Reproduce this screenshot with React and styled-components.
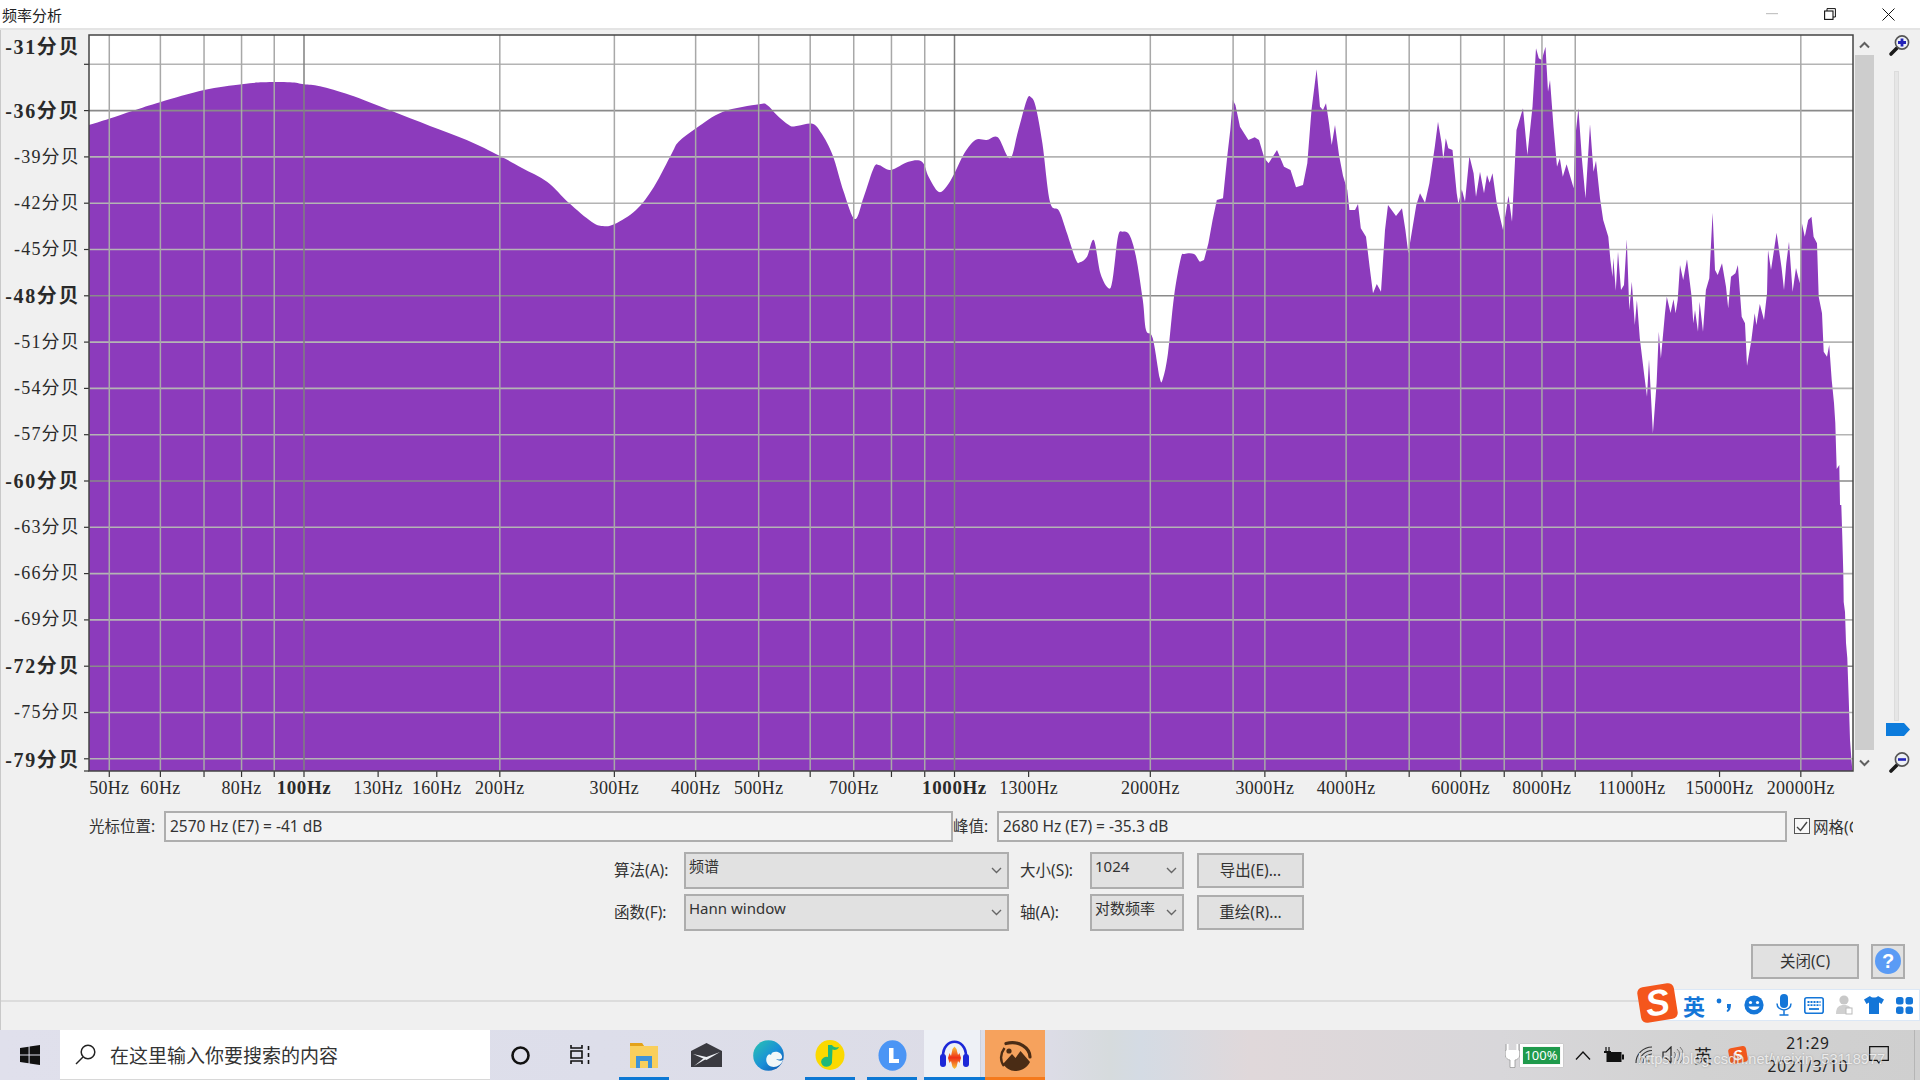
import React from "react";
import styled, { createGlobalStyle } from "styled-components";

const Global = createGlobalStyle`
  html, body { margin: 0; padding: 0; width: 1920px; height: 1080px; overflow: hidden; background: #f0f0f0; }
  #root { width: 1920px; height: 1080px; }
  * { box-sizing: border-box; }
`;

const UI_FONT = `"Noto Sans", "Noto Sans CJK SC", sans-serif`;
const AXIS_FONT = `"Liberation Serif", "Noto Sans CJK SC", serif`;

const Page = styled.div`
  position: relative;
  width: 1920px;
  height: 1080px;
  display: flex;
  flex-direction: column;
  font-family: ${UI_FONT};
  color: #333;
  overflow: hidden;
`;

/* ---------- title bar ---------- */
const TitleBar = styled.div`
  height: 30px;
  flex: none;
  display: flex;
  align-items: center;
  background: #fff;
  border-bottom: 2px solid #e4e4e4;
`;
const Title = styled.div`
  flex: 1;
  padding-left: 2px;
  font-size: 15px;
  color: #222;
`;
const WinButton = styled.div`
  width: 58.5px;
  height: 28px;
  padding-right: 4px;
  display: flex;
  align-items: center;
  justify-content: center;
`;

/* ---------- window body ---------- */
const Body = styled.div`
  flex: 1;
  min-height: 0;
  display: flex;
  flex-direction: column;
  background: #f0f0f0;
  border-left: 1px solid #c9c9c9;
`;
const ChartRow = styled.div`
  height: 781px;
  flex: none;
  display: flex;
`;
const ChartSvg = styled.svg`
  display: block;
  flex: none;
`;
const AxisText = styled.text`
  font-family: ${AXIS_FONT};
  font-size: ${(p) => (p.$major ? 19 : 18)}px;
  font-weight: ${(p) => (p.$major ? 700 : 400)};
  letter-spacing: ${(p) => (p.$major ? 0.6 : 0.3)}px;
  fill: #2a2a2a;
`;
const DbText = styled(AxisText)`
  font-size: ${(p) => (p.$major ? 20 : 18)}px;
  letter-spacing: ${(p) => (p.$major ? 1.6 : 1.2)}px;
`;

const ScrollCol = styled.div`
  width: 19px;
  flex: none;
  margin-top: 5px;
  height: 741px;
  display: flex;
  flex-direction: column;
`;
const ScrollArrow = styled.div`
  height: ${(p) => p.$h}px;
  flex: none;
  display: flex;
  align-items: center;
  justify-content: center;
`;
const ScrollThumb = styled.div`
  flex: 1;
  background: #cdcdcd;
`;
const ZoomCol = styled.div`
  width: 45px;
  flex: none;
  display: flex;
  flex-direction: column;
  align-items: center;
  padding-top: 3.5px;
`;
const ZoomIcon = styled.div`
  height: 26px;
  flex: none;
  margin-left: 5px;
  margin-top: ${(p) => p.$mt || 0}px;
`;
const SliderTrack = styled.div`
  position: relative;
  width: 5px;
  height: 650px;
  margin-top: 11.5px;
  background: #e6e6e6;
  border: 1px solid #dcdcdc;
  flex: none;
`;
const SliderThumb = styled.div`
  position: absolute;
  left: -9px;
  top: 651px;
  width: 24px;
  height: 13px;
  background: #0c7bdc;
  clip-path: polygon(0 0, 75% 0, 100% 50%, 75% 100%, 0 100%);
`;

/* ---------- readouts ---------- */
const ReadoutRow = styled.div`
  height: 31px;
  flex: none;
  display: flex;
  align-items: stretch;
  padding-left: 88px;
  font-size: 15.5px;
`;
const ReadoutLabel = styled.div`
  width: ${(p) => p.$w}px;
  flex: none;
  display: flex;
  align-items: center;
  padding-bottom: 2px;
  white-space: nowrap;
`;
const ReadoutBox = styled.div`
  width: ${(p) => p.$w}px;
  flex: none;
  display: flex;
  align-items: center;
  padding: 0 0 2px 4px;
  border: 2px solid #aeaeae;
  background: #f3f3f3;
  white-space: nowrap;
`;
const GridCheck = styled.label`
  margin-left: 7px;
  width: 59px;
  flex: none;
  overflow: hidden;
  display: flex;
  align-items: center;
  gap: 3px;
  padding-bottom: 1px;
  white-space: nowrap;
`;
const CheckBox = styled.span`
  width: 16px;
  height: 16px;
  flex: none;
  display: flex;
  align-items: center;
  justify-content: center;
  border: 1.5px solid #555;
  background: #f8f8f8;
`;

/* ---------- options ---------- */
const OptionsGrid = styled.div`
  flex: none;
  margin-top: 10px;
  padding-left: 613px;
  display: grid;
  grid-template-columns: 70px 325px 81px 94px 107px;
  grid-auto-rows: 36.5px;
  row-gap: 5.5px;
  font-size: 15.5px;
  align-items: center;
`;
const OptLabel = styled.div`
  white-space: nowrap;
  padding-bottom: 2px;
  padding-left: ${(p) => p.$inset || 0}px;
`;
const Dropdown = styled.div`
  position: relative;
  height: 100%;
  background: #e1e1e1;
  border: 2px solid #adadad;
  padding: 2px 26px 0 3px;
  font-size: 15px;
  line-height: 20px;
  white-space: nowrap;
  overflow: hidden;
`;
const Chevron = styled.svg`
  position: absolute;
  right: 5px;
  top: 13px;
`;
const Button = styled.div`
  display: flex;
  align-items: center;
  justify-content: center;
  padding-bottom: ${(p) => (p.$tight ? 0 : 2)}px;
  background: #e1e1e1;
  border: 2px solid #adadad;
  font-size: 15.5px;
  white-space: nowrap;
  height: ${(p) => p.$h || 35}px;
  width: ${(p) => p.$w}px;
  margin-left: ${(p) => p.$ml || 0}px;
`;

/* ---------- footer ---------- */
const FooterRow = styled.div`
  flex: none;
  margin-top: 13px;
  padding-right: 15px;
  display: flex;
  justify-content: flex-end;
  gap: 12px;
`;
const HelpDot = styled.div`
  width: 26px;
  height: 26px;
  border-radius: 50%;
  background: #5a9bf5;
  color: #fff;
  font-weight: 700;
  font-size: 20px;
  display: flex;
  align-items: center;
  justify-content: center;
  font-family: "Liberation Sans", sans-serif;
`;
const StatusBar = styled.div`
  flex: 1;
  margin-top: 21px;
  border-top: 2px solid #dcdcdc;
`;

/* ---------- taskbar ---------- */
const Taskbar = styled.div`
  position: relative;
  height: 50px;
  flex: none;
  display: flex;
  align-items: stretch;
  background: linear-gradient(90deg, #e0e0ec 0, #dddeea 600px, #dcdce6 1050px, #d6dbdd 1110px, #d4dbe4 1140px, #e0d8da 1250px, #d8d7da 1500px, #d2d2d2 1700px, #cfcfcf 1920px);
`;
const StartBtn = styled.div`
  width: 60px;
  flex: none;
  display: flex;
  align-items: center;
  justify-content: center;
`;
const SearchBox = styled.div`
  width: 430px;
  flex: none;
  background: #fff;
  display: flex;
  align-items: center;
  gap: 14px;
  padding-left: 15px;
  font-size: 19px;
  color: #333;
  font-family: "Noto Sans CJK SC", sans-serif;
  border-bottom: 1px solid #d8d8d8;
`;
const AppSlot = styled.div`
  position: relative;
  width: ${(p) => p.$w || 61}px;
  flex: none;
  margin-left: ${(p) => p.$ml || 0}px;
  display: flex;
  align-items: center;
  justify-content: center;
  background: ${(p) => p.$bg || "transparent"};
  &::after {
    content: "";
    display: ${(p) => (p.$bar ? "block" : "none")};
    position: absolute;
    left: ${(p) => p.$inset ?? 5}px;
    right: ${(p) => p.$inset ?? 5}px;
    bottom: 0;
    height: 3px;
    background: ${(p) => p.$bar};
  }
`;
const Tray = styled.div`
  margin-left: auto;
  display: flex;
  align-items: stretch;
`;
const TraySlot = styled.div`
  width: ${(p) => p.$w}px;
  flex: none;
  display: flex;
  align-items: center;
  justify-content: ${(p) => p.$justify || "center"};
  font-size: ${(p) => p.$fs || 14}px;
  color: #222;
`;
const PlugBattery = styled.div`
  display: flex;
  align-items: center;
`;
const BatteryOuter = styled.div`
  position: relative;
  width: 43px;
  height: 23px;
  margin-right: 3px;
  border: 2px solid #fff;
  padding: 1px;
  background: #f7f7f7;
  box-shadow: 0 0 1px #999;
`;
const BatteryFill = styled.div`
  width: 100%;
  height: 100%;
  background: #1f9a4c;
  color: #fff;
  font-size: 13px;
  line-height: 17px;
  text-align: center;
  font-family: "Noto Sans", sans-serif;
`;
const Clock = styled.div`
  display: flex;
  flex-direction: column;
  align-items: center;
  font-size: 15.5px;
  line-height: 23px;
  color: #222;
  letter-spacing: 0.8px;
  font-family: "Noto Sans", sans-serif;
  white-space: nowrap;
`;
const EdgeLine = styled.div`
  width: 1px;
  height: 100%;
  margin-left: 14px;
  background: #b5b5b5;
`;
const TraySogou = styled.span`
  display: inline-flex;
  width: 18px;
  height: 16px;
  align-items: center;
  justify-content: center;
  border-radius: 3px;
  background: #f2591d;
  color: #fff;
  font: italic 700 14px "Liberation Sans", sans-serif;
  transform: rotate(-10deg);
`;
const Watermark = styled.div`
  position: absolute;
  left: 1638px;
  top: 21px;
  font-family: "Liberation Sans", sans-serif;
  font-size: 14.6px;
  white-space: nowrap;
  color: rgba(255, 255, 255, 0.75);
  text-shadow: 0 0 2px rgba(110, 110, 110, 0.6);
`;

/* ---------- floating input-method bar ---------- */
const ImeBar = styled.div`
  position: absolute;
  left: 1660px;
  top: 989px;
  width: 260px;
  height: 32px;
  background: #fff;
  border: 1px solid #dce8f6;
  display: flex;
  align-items: center;
  padding-left: 18px;
  gap: 0;
`;
const ImeLogo = styled.div`
  position: absolute;
  left: -22px;
  top: -5px;
  width: 37px;
  height: 36px;
  border-radius: 6px;
  background: #f4561c;
  transform: rotate(-9deg);
  color: #fff;
  display: flex;
  align-items: center;
  justify-content: center;
  font: italic 900 36px "Liberation Sans", sans-serif;
`;
const ImeCell = styled.div`
  width: 30px;
  flex: none;
  display: flex;
  justify-content: center;
  align-items: center;
  color: #1476d8;
  font-weight: 700;
  font-size: ${(p) => p.$fs || 20}px;
  font-family: "Noto Sans CJK SC", sans-serif;
`;

/* ---------- data ---------- */
const OUT = [
[89,125],[109,118.7],[133,110.7],[160.7,102],[204,90],[241.7,84.3],[263,82.3],[290,82.3],[304,84.3],[320,86.3],[350,95],[390,110.3],[430,126],[466.7,140],[500,156],
[522,168],[547,181.7],[569,203],[591.5,221.7],[602.7,226],[614.7,224],[636,210],[654,186.7],[672,153],[678.6,141.7],[696.4,128],[723,111.7],[759,104.3],[767,105],[776.8,115],[790,125.7],[798,125.7],[812.5,123.7],[821.4,133.3],[832.6,155],[843.7,191.7],[855,219],[863.8,196.7],[874,167.3],[879.5,165.3],[890.6,170],[908.5,161.7],[922,161.7],[928.6,176.7],[938.4,191.7],[946.4,186.7],[954.5,173.3],[964.3,153.3],[975.4,140],[986.6,140],[997.8,137.3],[1010,158.3],[1017.9,131.7],[1026.8,100],[1031,97.3],[1035.7,106.7],[1042.4,143.3],[1050,201.7],[1059,210.7],[1067,233.3],[1076,260],[1080,262.3],[1087,256.7],[1093.8,240],[1100.4,273.3],[1108.5,288.3],[1112.5,280],[1118,236.7],[1122.8,231.7],[1129.5,235],[1136,256.7],[1142.8,300],[1146,330],[1152.7,338],[1159.8,378.3],[1163,378.3],[1168,353],[1174,296.7],[1180.8,258.3],[1184.4,254],[1194,254],
[1200,261.7],[1204,260],[1208.4,243.3],[1212.6,220],[1216.8,200],[1223,198.3],[1227.4,155],[1230.3,130],[1232.8,100],[1235.4,105],[1240,126.7],[1248.4,140],[1254.7,137.3],[1259,140],[1264.4,158.3],[1268.6,163.3],[1277,150],[1284,166.7],[1290.5,170],[1296,187.3],[1303,185],[1307.3,163.3],[1311.5,110],[1316.6,69.3],[1320,106.7],[1323,110],[1326,103.3],[1329,123.3],[1331.7,145],[1335,125],[1339,155],[1343,175.7],[1347.3,190],[1349.4,210],[1355,210],[1358,204],[1360.8,228.3],[1366,236.7],[1369.6,266.7],[1373,293.3],[1376.8,284],[1381,291.7],[1385,230],[1388,205],[1396,216],[1402,208.3],[1405.4,230],[1408.3,253.3],[1411.7,232.7],[1416.3,205],[1420,193.3],[1425,202.7],[1429.4,183.3],[1434.8,146.7],[1438,121.7],[1441.6,143.3],[1443.3,159.3],[1445.8,138.3],[1448.3,148.3],[1452.5,150],[1456.7,193.3],[1458.4,204],[1461.8,189.3],[1465,201.7],[1469.4,156],[1473.6,173.3],[1476,196.7],[1480,171.7],[1484,193.3],[1487,175],[1489.6,182.7],[1492.5,173.3],[1496.7,203.3],[1503,230],[1508.5,195.7],[1512,221.7],[1516.5,130],[1523,108.3],[1527.4,155],[1532.5,106.7],[1536,48.3],[1538.8,58.3],[1541.7,60],[1545.5,46.7],[1548,91.7],[1550,80],[1553.5,126.7],[1557,166.7],[1559.8,158.3],[1562.8,176.7],[1566.6,164.3],[1573.7,188.3],[1575,140],[1578.4,108.3],[1582,160],[1585.5,198.3],[1590,124.3],[1593.5,171.7],[1596,160.7],[1600,198.3],[1603.2,220],[1608.3,236.7],[1610.4,260],[1612.5,276.7],[1613.3,258],[1615.8,290.7],[1618,251.7],[1621,290],[1624,285],[1626.8,239.3],[1629.3,310],[1631.8,281.7],[1634.8,325],[1636.9,300],[1639.8,338.3],[1644,373.3],[1647,396.7],[1649,359.3],[1652.9,433.3],[1656.6,383.3],[1658.8,331.7],[1660.9,358.3],[1665,313],[1666.8,296.7],[1670.5,313],[1673.5,299.3],[1675.6,313.3],[1677.7,300],[1680,265],[1683.2,280],[1687,259.3],[1691.6,296.7],[1693.3,323.3],[1695,310],[1698,331.7],[1699.6,301.7],[1703,331.7],[1705.9,290],[1709.3,278.3],[1712.6,212.7],[1715,270],[1717.7,275],[1722,263.3],[1726,286.7],[1728.2,308.3],[1731,276.7],[1735.4,273.3],[1737.9,265],[1741.7,316.7],[1745,323.3],[1747,366],[1751.4,340],[1754.7,313.3],[1756.4,325],[1759.8,304],[1764,320],[1767,293.3],[1768,250],[1771,270],[1776.6,232.7],[1781.6,268],[1784,290],[1786.3,263.3],[1789,241.7],[1792.6,291.7],[1796,268],[1799.7,283.3],[1801.9,223.3],[1804.8,236.7],[1808.2,220],[1811.5,216.7],[1813.6,236.7],[1817,243.3],[1818.7,296.7],[1822,313.3],[1823.7,351.7],[1827,356.7],[1829.2,345],[1831.7,380],
[1832.7,390],[1834,403],[1835.3,423],[1836,447],[1836.7,469],[1839.3,465],[1840,505],[1841.3,505],[1842.3,537],[1843.3,573],[1843.7,602],[1845,612],[1846,643],[1847.3,658],[1848.7,698],[1850,740],[1851.3,758],[1852.3,770],[1853,771],
];

/* smooth Catmull-Rom curve for the low-frequency part, straight pixel-sharp spikes above 1200 */
const buildArea = () => {
  let d = "M89 771 L89 125";
  for (let i = 1; i < OUT.length; i++) {
    const p1 = OUT[i - 1];
    const p2 = OUT[i];
    if (p2[0] <= 1200) {
      const p0 = OUT[Math.max(i - 2, 0)];
      const p3 = OUT[Math.min(i + 1, OUT.length - 1)];
      const c1x = p1[0] + (p2[0] - p0[0]) / 6;
      const c1y = p1[1] + (p2[1] - p0[1]) / 6;
      const c2x = p2[0] - (p3[0] - p1[0]) / 6;
      const c2y = p2[1] - (p3[1] - p1[1]) / 6;
      d += ` C${c1x.toFixed(1)} ${c1y.toFixed(1)} ${c2x.toFixed(1)} ${c2y.toFixed(1)} ${p2[0]} ${p2[1]}`;
    } else {
      d += ` L${p2[0]} ${p2[1]}`;
    }
  }
  return d + " Z";
};
const AREA = buildArea();

const X_NUDGE = { 50: 1.1, 60: 0.7, 70: 0.8, 80: 0.6 };
const fx = (f) => 304 + 650.5 * Math.log10(f / 100) + (X_NUDGE[f] || 0);
const GRID_F = [50,60,70,80,90,100,200,300,400,500,600,700,800,900,1000,2000,2681,3000,4000,5000,6000,7000,8000,9000,20000];
const DARK_F = [100, 1000];
const TICK_F = [...GRID_F.filter((f) => f !== 2681), 130, 160, 1300, 11000, 15000];
const X_LABELS = [50,60,80,100,130,160,200,300,400,500,700,1000,1300,2000,3000,4000,6000,8000,11000,15000,20000];

const GRID_Y = [-33,-36,-39,-42,-45,-48,-51,-54,-57,-60,-63,-66,-69,-72,-75,-78];
const dy = (db) => 110.6 + ((-36 - db) / 3) * 46.3;
const Y_LABELS = [
  { t: "-31分贝", y: 54, major: true },
  { t: "-36分贝", y: 118, major: true },
  { t: "-39分贝", y: 163 },
  { t: "-42分贝", y: 209 },
  { t: "-45分贝", y: 255 },
  { t: "-48分贝", y: 303, major: true },
  { t: "-51分贝", y: 348 },
  { t: "-54分贝", y: 394 },
  { t: "-57分贝", y: 440 },
  { t: "-60分贝", y: 488, major: true },
  { t: "-63分贝", y: 533 },
  { t: "-66分贝", y: 579 },
  { t: "-69分贝", y: 625 },
  { t: "-72分贝", y: 673, major: true },
  { t: "-75分贝", y: 718 },
  { t: "-79分贝", y: 767, major: true },
];
const MAJOR_Y = [-36, -48, -60, -72];

const Chart = () => (
  <ChartSvg width={1854} height={781} viewBox="1 30 1854 781">
    <rect x="89" y="35" width="1764" height="736" fill="#fff" />
    <path d={AREA} fill="#8c3bbc" />
    {GRID_Y.map((d) => {
      const y = dy(d);
      const major = MAJOR_Y.includes(d);
      return (
        <g key={d}>
          <line x1="89" x2="1853" y1={y} y2={y} stroke={major ? "#8a8a8a" : "#b4b4b4"} strokeWidth="1.6" />
          <line x1="84" x2="89" y1={y} y2={y} stroke="#333" strokeWidth="1.2" />
        </g>
      );
    })}
    {GRID_F.map((f) => {
      const x = fx(f);
      return <line key={f} x1={x} x2={x} y1="35" y2="771" stroke={DARK_F.includes(f) ? "#808080" : "#a8a8a8"} strokeWidth="1.5" />;
    })}
    {TICK_F.map((f) => {
      const x = fx(f);
      return <line key={f} x1={x} x2={x} y1="771" y2="777" stroke="#333" strokeWidth="1.2" />;
    })}
    <rect x="89" y="35" width="1764" height="736" fill="none" stroke="#444" strokeWidth="1.5" />
    <line x1="84" x2="89" y1="771" y2="771" stroke="#333" strokeWidth="1.2" />
    {Y_LABELS.map((l) => (
      <DbText key={l.t} $major={l.major} x="80" y={l.y} textAnchor="end">{l.t}</DbText>
    ))}
    {X_LABELS.map((f) => (
      <AxisText key={f} $major={f === 100 || f === 1000} x={fx(f)} y="794" textAnchor="middle">{f}Hz</AxisText>
    ))}
  </ChartSvg>
);

/* ---------- icons ---------- */
const UpChevron = ({ flip }) => (
  <svg width="11" height="8" viewBox="0 0 11 8" style={flip ? { transform: "scaleY(-1)" } : undefined}>
    <path d="M1 6.5 L5.5 2 L10 6.5" fill="none" stroke="#606060" strokeWidth="2" />
  </svg>
);
const Magnifier = ({ plus }) => (
  <svg width="24" height="24" viewBox="0 0 24 24" style={{ display: "block" }}>
    <path d="M4 20 L10.5 13.5" stroke="#1a1a1a" strokeWidth="3.6" strokeLinecap="round" />
    <circle cx="15" cy="8.5" r="6.6" fill="#eef1f6" stroke="#555" strokeWidth="1.6" />
    {plus ? (
      <path d="M15 4.5 V12.5 M11 8.5 H19" stroke="#2323b8" strokeWidth="2.8" />
    ) : (
      <path d="M11 8.5 H19" stroke="#2323b8" strokeWidth="2.6" />
    )}
  </svg>
);
const DropChevron = () => (
  <Chevron width="11" height="7" viewBox="0 0 11 7">
    <path d="M1 1 L5.5 5.5 L10 1" fill="none" stroke="#666" strokeWidth="1.4" />
  </Chevron>
);
const WinLogo = () => (
  <svg width="20" height="20" viewBox="0 0 20 20">
    <path d="M0 3 L8.6 1.7 V9.4 H0 Z M9.6 1.5 L20 0 V9.4 H9.6 Z M0 10.6 H8.6 V18.3 L0 17 Z M9.6 10.6 H20 V20 L9.6 18.5 Z" fill="#111" />
  </svg>
);
const SearchIcon = () => (
  <svg width="21" height="21" viewBox="0 0 21 21">
    <circle cx="13" cy="8" r="6.8" fill="none" stroke="#222" strokeWidth="1.5" />
    <path d="M8 13 L1 20" stroke="#222" strokeWidth="1.5" />
  </svg>
);
const TaskView = () => (
  <svg width="21" height="20" viewBox="0 0 21 20">
    <path d="M1 0 V3 H12 V0 M1 19 V16 H12 V19 M1 6 H12 V13 H1 Z" fill="none" stroke="#111" strokeWidth="1.6" />
    <path d="M18.5 1 V5 M18.5 8 V12 M18.5 15 V19" stroke="#111" strokeWidth="1.6" />
  </svg>
);
const Explorer = () => (
  <svg width="28" height="25" viewBox="0 0 28 25">
    <path d="M0 0 H12 L14 3 H28 V25 H0 Z" fill="#f9cf5c" />
    <path d="M0 0 H12 L14 3 H0 Z" fill="#e3a21a" />
    <path d="M6 13 H22 V25 H18 V18 H10 V25 H6 Z" fill="#3f93d8" />
  </svg>
);
const Mail = () => (
  <svg width="31" height="24" viewBox="0 0 31 24">
    <path d="M0 8 L15.5 0 L31 8 L31 24 H0 Z" fill="#3a3a40" />
    <path d="M2 11 L15.5 17 L29 9 L15.5 14 Z" fill="#eef0f4" />
    <path d="M3 23 L13 15 L15 16 Z" fill="#eef0f4" />
  </svg>
);
const Edge = () => (
  <svg width="31" height="31" viewBox="0 0 31 31">
    <defs>
      <linearGradient id="edgeA" x1="0" y1="0" x2="1" y2="1">
        <stop offset="0" stopColor="#29c5b0" />
        <stop offset="0.55" stopColor="#1a8fd8" />
        <stop offset="1" stopColor="#0f4fa8" />
      </linearGradient>
    </defs>
    <circle cx="15.5" cy="15.5" r="15.3" fill="url(#edgeA)" />
    <path d="M18 15 C18 11.5 24.5 10.5 27.5 13.5 C29 15 29.5 17 28.8 18.2 C28 19.5 25 19.8 23 19 C25.5 21 28 21 30 20 C28.5 25 23 28 18 26.5 C13.5 25 11.5 19 15 15 C16 14 17 14 18 15 Z" fill="#f1f7f8" />
  </svg>
);
const QQMusic = () => (
  <svg width="30" height="30" viewBox="0 0 30 30">
    <ellipse cx="15" cy="15" rx="14.5" ry="15" fill="#fbd900" />
    <path d="M13 5 L17 5 C18 7 21 8 24 7 C23 10 19.5 10.5 17.5 9.5 L17 21 A5.5 5 0 1 1 13 17 Z" fill="#1fb87a" />
  </svg>
);
const LApp = () => (
  <svg width="29" height="31" viewBox="0 0 29 31">
    <ellipse cx="14.5" cy="15.5" rx="14" ry="15.3" fill="#4b95f5" />
    <path d="M11 8 H15.5 V19 H21 V23 H11 Z" fill="#fff" />
  </svg>
);
const Audacity = () => (
  <svg width="31" height="30" viewBox="0 0 31 30">
    <defs>
      <linearGradient id="audWave" x1="0" y1="0" x2="0" y2="1">
        <stop offset="0" stopColor="#f8c83a" />
        <stop offset="0.5" stopColor="#ef2f15" />
        <stop offset="1" stopColor="#f8c83a" />
      </linearGradient>
    </defs>
    <path d="M4 16 C4 -3 27 -3 27 16" fill="none" stroke="#1c28d8" strokeWidth="2.6" />
    <rect x="1" y="14" width="6" height="13" rx="3" fill="#1c28d8" />
    <rect x="24" y="14" width="6" height="13" rx="3" fill="#1c28d8" />
    <path d="M9 18 L10.5 13 L12 16 L13.5 9 L15.5 6.5 L17.5 9 L19 15 L20.5 13 L22 18 L20.5 23 L19 21 L17.5 27 L15.5 29 L13.5 27 L12 21 L10.5 23 Z" fill="url(#audWave)" />
  </svg>
);
const PeakApp = () => (
  <svg width="33" height="33" viewBox="0 0 33 33">
    <path d="M7 4.5 C20 1 31 9 31 18" fill="none" stroke="#4a2c15" strokeWidth="3.2" strokeLinecap="round" />
    <path d="M5.5 9 C1 15 1 22 5 27" fill="none" stroke="#4a2c15" strokeWidth="2.4" />
    <path d="M4 25 L13 15 L16.5 19 L21.5 12 L31 23 C28 29 22 32 16 32 C11 32 7 29 4 25 Z" fill="#4a2c15" />
    <circle cx="10" cy="12" r="2.6" fill="#4a2c15" />
  </svg>
);
const Plug = () => (
  <svg width="15" height="25" viewBox="0 0 15 25">
    <path d="M2.5 1 V8 M12.5 1 V8 M0.7 8 H14.3 V12 C14.3 15 11 16.5 9 16.5 V24 H6 V16.5 C4 16.5 0.7 15 0.7 12 Z" fill="#fff" stroke="#fff" strokeWidth="2.2" />
    <path d="M1 1 V7.5 H0.2 V12 C0.2 15.5 3.5 17 5 17 V24.5 H10 V17 C11.5 17 14.8 15.5 14.8 12 V7.5 H14 V1" fill="none" stroke="#888" strokeWidth="0.7" />
  </svg>
);
const Caret = () => (
  <svg width="16" height="9" viewBox="0 0 16 9">
    <path d="M1 8.5 L8 1 L15 8.5" fill="none" stroke="#111" strokeWidth="1.3" />
  </svg>
);
const SmallBattery = () => (
  <svg width="21" height="18" viewBox="0 0 21 18">
    <path d="M3 1 V5 M6 1 V5" stroke="#111" strokeWidth="1.2" />
    <rect x="1" y="5" width="7" height="2" fill="#111" />
    <rect x="3.5" y="6" width="15" height="10" fill="#111" />
    <rect x="19" y="8.5" width="2" height="5" fill="#111" />
  </svg>
);
const Wifi = () => (
  <svg width="18" height="18" viewBox="0 0 18 18">
    <path d="M1 17 A16 16 0 0 1 17 1 M4.5 17 A12.5 12.5 0 0 1 17 4.5 M8 17 A9 9 0 0 1 17 8" fill="none" stroke="#333" strokeWidth="1.1" />
    <circle cx="13" cy="15" r="1.5" fill="#333" />
  </svg>
);
const Speaker = () => (
  <svg width="21" height="18" viewBox="0 0 21 18">
    <path d="M1 6 H4 L9 1 V17 L4 12 H1 Z" fill="none" stroke="#222" strokeWidth="1.2" />
    <path d="M12 6 A4 4 0 0 1 12 12 M15 3 A8 8 0 0 1 15 15 M18 1 A11 11 0 0 1 18 17" fill="none" stroke="#777" strokeWidth="1" />
  </svg>
);
const Notify = () => (
  <svg width="20" height="19" viewBox="0 0 20 19">
    <path d="M0.7 0.7 H19.3 V14.3 H12 L10 17 L8 14.3 H0.7 Z" fill="none" stroke="#111" strokeWidth="1.2" />
  </svg>
);

const BLUE = "#1476d8";
const Smile = () => (
  <svg width="20" height="20" viewBox="0 0 20 20">
    <circle cx="10" cy="10" r="9.6" fill={BLUE} />
    <circle cx="6.5" cy="7.5" r="1.6" fill="#fff" />
    <circle cx="13.5" cy="7.5" r="1.6" fill="#fff" />
    <path d="M4.5 11.5 C6 16 14 16 15.5 11.5 Z" fill="#fff" />
  </svg>
);
const Punct = () => (
  <svg width="16" height="16" viewBox="0 0 16 16">
    <circle cx="3" cy="4" r="2.4" fill={BLUE} />
    <path d="M11 7 H15 C15 11 14 14 11.5 15 L10.5 14 C11.5 13 12 12 12 11 H11 Z" fill={BLUE} />
  </svg>
);
const Mic = () => (
  <svg width="16" height="22" viewBox="0 0 16 22">
    <rect x="4" y="0" width="8" height="14" rx="4" fill={BLUE} />
    <path d="M1 9.5 C1 18 15 18 15 9.5 M8 16.5 V21 M3.5 21 H12.5" fill="none" stroke={BLUE} strokeWidth="1.5" />
  </svg>
);
const Keyboard = () => (
  <svg width="20" height="17" viewBox="0 0 20 17">
    <rect x="0.8" y="0.8" width="18.4" height="15.4" rx="2" fill="none" stroke={BLUE} strokeWidth="1.6" />
    <path d="M3.5 5 H16.5 M3.5 8.2 H16.5" stroke={BLUE} strokeWidth="1.8" strokeDasharray="2 1" />
    <path d="M5 12 H15" stroke={BLUE} strokeWidth="1.8" />
  </svg>
);
const Person = () => (
  <svg width="17" height="20" viewBox="0 0 17 20">
    <circle cx="8" cy="5" r="4.6" fill="#c8c8c8" />
    <path d="M0 19 C0 12 3 10 8 10 C13 10 16 12 16 19 Z" fill="#d0d0d0" />
    <rect x="10" y="13" width="6" height="6" fill="#fff" stroke="#bbb" />
  </svg>
);
const Shirt = () => (
  <svg width="20" height="18" viewBox="0 0 20 18">
    <path d="M6 0 C7.5 2 12.5 2 14 0 L20 3.5 L17.5 8 L15 6.5 V18 H5 V6.5 L2.5 8 L0 3.5 Z" fill={BLUE} />
  </svg>
);
const Tiles = () => (
  <svg width="17" height="17" viewBox="0 0 17 17">
    <rect x="0" y="0" width="7.5" height="7.5" rx="2.5" fill={BLUE} />
    <rect x="9.5" y="0" width="7.5" height="7.5" rx="2.5" fill={BLUE} />
    <rect x="0" y="9.5" width="7.5" height="7.5" rx="2.5" fill={BLUE} />
    <rect x="9.5" y="9.5" width="7.5" height="7.5" rx="2.5" fill={BLUE} />
  </svg>
);

export default function App() {
  return (
    <Page>
      <Global />
      <TitleBar>
        <Title>频率分析</Title>
        <WinButton>
          <svg width="12" height="2" viewBox="0 0 12 2"><rect width="12" height="1.2" fill="#c4c4c4" /></svg>
        </WinButton>
        <WinButton>
          <svg width="12" height="12" viewBox="0 0 12 12">
            <path d="M3 3 V0.6 H11.4 V9 H9" fill="none" stroke="#111" strokeWidth="1" />
            <rect x="0.6" y="3" width="8.4" height="8.4" fill="none" stroke="#111" strokeWidth="1.1" />
          </svg>
        </WinButton>
        <WinButton>
          <svg width="13" height="13" viewBox="0 0 13 13"><path d="M0.5 0.5 L12.5 12.5 M12.5 0.5 L0.5 12.5" stroke="#111" strokeWidth="1" /></svg>
        </WinButton>
      </TitleBar>

      <Body>
        <ChartRow>
          <Chart />
          <ScrollCol>
            <ScrollArrow $h={20}><UpChevron /></ScrollArrow>
            <ScrollThumb />
            <ScrollArrow $h={26}><UpChevron flip /></ScrollArrow>
          </ScrollCol>
          <ZoomCol>
            <ZoomIcon><Magnifier plus /></ZoomIcon>
            <SliderTrack><SliderThumb /></SliderTrack>
            <ZoomIcon $mt={29.5}><Magnifier /></ZoomIcon>
          </ZoomCol>
        </ChartRow>

        <ReadoutRow>
          <ReadoutLabel $w={75}>光标位置:</ReadoutLabel>
          <ReadoutBox $w={789}>2570 Hz (E7) = -41 dB</ReadoutBox>
          <ReadoutLabel $w={44}>峰值:</ReadoutLabel>
          <ReadoutBox $w={790}>2680 Hz (E7) = -35.3 dB</ReadoutBox>
          <GridCheck>
            <CheckBox>
              <svg width="12" height="11" viewBox="0 0 12 11"><path d="M1 6 L4.5 9.5 L11 1" fill="none" stroke="#444" strokeWidth="1.4" /></svg>
            </CheckBox>
            网格(G)
          </GridCheck>
        </ReadoutRow>

        <OptionsGrid>
          <OptLabel>算法(A):</OptLabel>
          <Dropdown>频谱<DropChevron /></Dropdown>
          <OptLabel $inset={11}>大小(S):</OptLabel>
          <Dropdown>1024<DropChevron /></Dropdown>
          <Button $ml={13} $w={107}>导出(E)...</Button>
          <OptLabel>函数(F):</OptLabel>
          <Dropdown>Hann window<DropChevron /></Dropdown>
          <OptLabel $inset={11}>轴(A):</OptLabel>
          <Dropdown>对数频率<DropChevron /></Dropdown>
          <Button $ml={13} $w={107}>重绘(R)...</Button>
        </OptionsGrid>

        <FooterRow>
          <Button $w={108}>关闭(C)</Button>
          <Button $w={34} $tight><HelpDot>?</HelpDot></Button>
        </FooterRow>
        <StatusBar />
      </Body>

      <ImeBar>
        <ImeLogo>S</ImeLogo>
        <ImeCell $fs={22}>英</ImeCell>
        <ImeCell><Punct /></ImeCell>
        <ImeCell><Smile /></ImeCell>
        <ImeCell><Mic /></ImeCell>
        <ImeCell><Keyboard /></ImeCell>
        <ImeCell><Person /></ImeCell>
        <ImeCell><Shirt /></ImeCell>
        <ImeCell><Tiles /></ImeCell>
      </ImeBar>

      <Taskbar>
        <StartBtn><WinLogo /></StartBtn>
        <SearchBox>
          <SearchIcon />
          在这里输入你要搜索的内容
        </SearchBox>
        <AppSlot $w={60}>
          <svg width="19" height="19" viewBox="0 0 19 19"><circle cx="9.5" cy="9.5" r="8" fill="none" stroke="#111" strokeWidth="2.6" /></svg>
        </AppSlot>
        <AppSlot $w={60}><TaskView /></AppSlot>
        <AppSlot $ml={3} $w={62} $bar="#0c78d4" $inset={6}><Explorer /></AppSlot>
        <AppSlot $w={62}><Mail /></AppSlot>
        <AppSlot $w={62}><Edge /></AppSlot>
        <AppSlot $w={62} $bar="#0c78d4" $inset={6}><QQMusic /></AppSlot>
        <AppSlot $w={62} $bar="#0c78d4" $inset={6}><LApp /></AppSlot>
        <AppSlot
          $ml={1}
          $w={61}
          $bg="linear-gradient(90deg, #eef1f6 56px, #ccd0dc 56px, #ccd0dc 57px, transparent 57px)"
          $bar="#0c78d4"
          $inset={0}
        >
          <Audacity />
        </AppSlot>
        <AppSlot $w={60} $bg="#f6a25d" $bar="#f57a1c" $inset={0}><PeakApp /></AppSlot>
        <Tray>
          <TraySlot $w={70}>
            <PlugBattery>
              <Plug />
              <BatteryOuter><BatteryFill>100%</BatteryFill></BatteryOuter>
            </PlugBattery>
          </TraySlot>
          <TraySlot $w={26}><Caret /></TraySlot>
          <TraySlot $w={34}><SmallBattery /></TraySlot>
          <TraySlot $w={27}><Wifi /></TraySlot>
          <TraySlot $w={31}><Speaker /></TraySlot>
          <TraySlot $w={30} $fs={18}>英</TraySlot>
          <TraySlot $w={40}><TraySogou>S</TraySogou></TraySlot>
          <TraySlot $w={100}>
            <Clock><span>21:29</span><span>2021/3/10</span></Clock>
          </TraySlot>
          <TraySlot $w={42}><Notify /></TraySlot>
          <TraySlot $w={20} $justify="flex-start"><EdgeLine /></TraySlot>
        </Tray>
        <Watermark>https://blog.csdn.net/weixin_53118977</Watermark>
      </Taskbar>
    </Page>
  );
}
